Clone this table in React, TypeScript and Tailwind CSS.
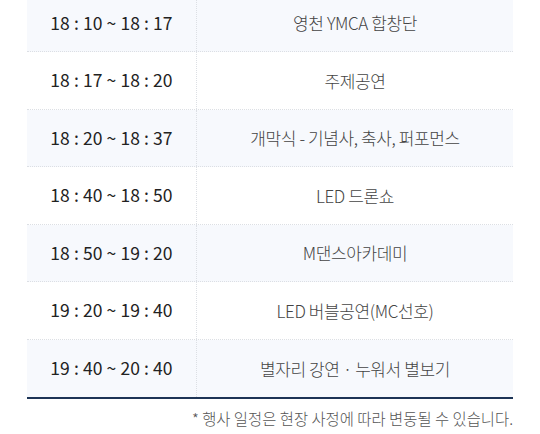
const rows = [
  { time: '18 : 10 ~ 18 : 17', title: '영천 YMCA 합창단' },
  { time: '18 : 17 ~ 18 : 20', title: '주제공연' },
  { time: '18 : 20 ~ 18 : 37', title: '개막식 - 기념사, 축사, 퍼포먼스' },
  { time: '18 : 40 ~ 18 : 50', title: 'LED 드론쇼' },
  { time: '18 : 50 ~ 19 : 20', title: 'M댄스아카데미' },
  { time: '19 : 20 ~ 19 : 40', title: 'LED 버블공연(MC선호)' },
  { time: '19 : 40 ~ 20 : 40', title: '별자리 강연 · 누워서 별보기' },
];

export default function App() {
  return (
    <div className="w-[540px] h-[434px] overflow-hidden bg-white font-['Noto_Sans_CJK_KR','Noto_Sans',sans-serif]">
      <div className="mx-[27px] -mt-[5.5px]">
        <div className="border-b-2 border-[#1d3456]">
          {rows.map((row, i) => (
            <div
              key={i}
              className={`flex h-[57.5px] ${i % 2 === 0 ? 'bg-[#f7f9fd]' : 'bg-white'} ${
                i < rows.length - 1 ? 'border-b border-dotted border-[#dcdfe4]' : ''
              }`}
            >
              <div className="w-[170px] flex items-center justify-center border-r border-dotted border-[#dcdfe4] text-[17.5px] font-normal text-[#222] tracking-[0.1px]">
                {row.time}
              </div>
              <div className="flex-1 flex items-center justify-center text-[17px] font-light text-[#444] tracking-[-0.4px]">
                {row.title}
              </div>
            </div>
          ))}
        </div>
        <p className="mt-[8px] text-right text-[15.4px] font-light text-[#555]">
          * 행사 일정은 현장 사정에 따라 변동될 수 있습니다.
        </p>
      </div>
    </div>
  );
}
